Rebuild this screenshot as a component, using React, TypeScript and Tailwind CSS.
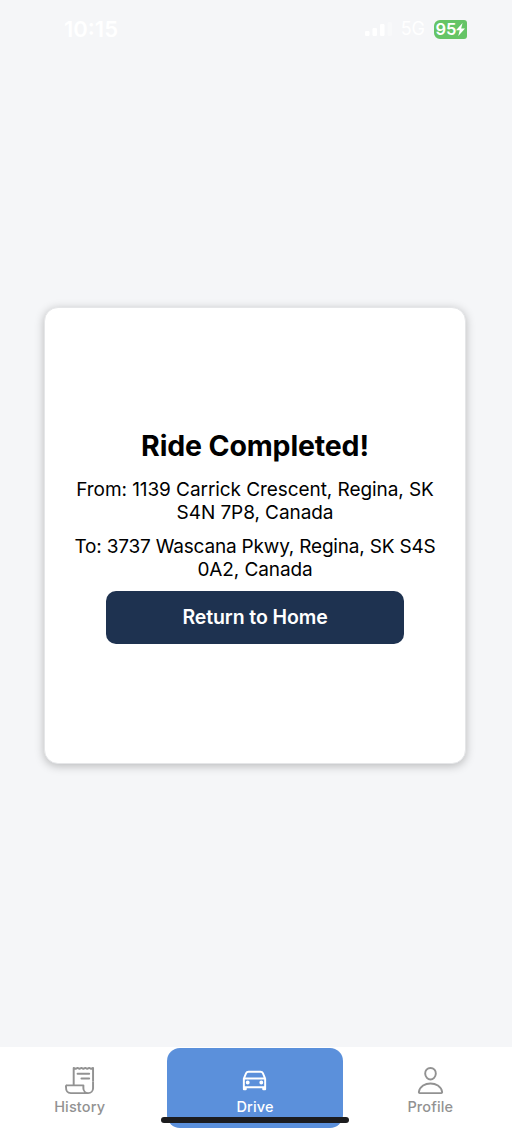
import type { ReactNode } from 'react';

function StatusBar() {
  return (
    <header className="flex h-[58px] shrink-0 items-center justify-between pl-16 pr-[45px] text-white">
      <time className="text-[22px] font-semibold leading-none">10:15</time>
      <div className="flex items-center">
        <svg className="h-[14px] w-[28px]" viewBox="0 0 28 14" fill="currentColor">
          <rect x="0" y="9" width="4.5" height="5" rx="1.2" />
          <rect x="7.5" y="6" width="4.5" height="8" rx="1.2" />
          <rect x="15" y="2" width="4.5" height="12" rx="1.2" />
          <rect x="22.5" y="0" width="4.5" height="14" rx="1.2" opacity="0.3" />
        </svg>
        <span className="ml-[8px] text-[18px] leading-none">5G</span>
        <div className="ml-[9px] flex h-[19px] w-[33px] items-center justify-center rounded-l-[6px] rounded-r-[3px] bg-[#65c466]">
          <span className="text-[16.5px] font-semibold leading-none">95</span>
          <svg className="h-[13px] w-[9px]" viewBox="0 0 8 13" preserveAspectRatio="none" fill="currentColor">
            <path d="M5.8 0 0 7.2h3.3L2 13l6-7.5H4.6z" />
          </svg>
        </div>
      </div>
    </header>
  );
}

function Icon({ children }: { children: ReactNode }) {
  return (
    <svg className="size-[31px]" viewBox="0 0 512 512" fill="none" stroke="currentColor" strokeWidth="32" strokeLinejoin="round">
      {children}
    </svg>
  );
}

function Tab({ label, active, children }: { label: string; active?: boolean; children: ReactNode }) {
  return (
    <button
      className={
        active
          ? 'flex flex-col items-center rounded-[13px] bg-[#5b90db] pt-[17.5px] text-white'
          : 'flex flex-col items-center pt-[17.5px] text-[#929292]'
      }
    >
      {children}
      <span className="mt-px text-[14.5px] font-medium leading-5 tracking-[0.15px]">{label}</span>
    </button>
  );
}

export default function App() {
  return (
    <div className="flex h-[1128px] w-[512px] flex-col overflow-hidden bg-[#f5f6f8] font-['Inter','Liberation_Sans',sans-serif]">
      <StatusBar />
      <main className="flex-1 pl-11 pt-[249px]">
        <section className="flex h-[457px] w-[422px] flex-col items-center rounded-[14px] border border-[#e5e6e8] bg-white pt-[120px] text-center text-black shadow-[0_2px_10px_rgba(0,0,0,0.25)]">
          <h1 className="text-[28.5px] font-bold leading-9 tracking-[-0.15px]">Ride Completed!</h1>
          <p className="mt-[14px] text-[19px] leading-[23px] tracking-[-0.07px]">
            From: 1139 Carrick Crescent, Regina, SK
            <br />
            S4N 7P8, Canada
          </p>
          <p className="mt-[11px] text-[19px] leading-[23px] tracking-[-0.19px]">
            To: 3737 Wascana Pkwy, Regina, SK S4S
            <br />
            <span className="tracking-[-0.1px]">0A2, Canada</span>
          </p>
          <button className="mt-[9.5px] h-[53px] w-[298px] shrink-0 rounded-[10px] bg-[#1e3250] pt-[2px] text-[19.5px] font-semibold tracking-[-0.1px] text-white">
            Return to Home
          </button>
        </section>
      </main>
      <nav className="relative h-[81px] shrink-0 bg-white">
        <div className="-ml-2 grid h-full w-[526px] grid-cols-3 pt-[0.5px]">
          <Tab label="History">
            <Icon>
              <path d="M160 336V48l32 16 32-16 31.94 16 32.37-16L320 64l31.79-16 31.93 16L416 48l32.01 16L480 48v224" />
              <path d="M480 272v112a80 80 0 0 1-80 80 80 80 0 0 1-80-80v-48H48a15.86 15.86 0 0 0-16 16c0 64 6.74 112 80 112h288" />
              <path strokeLinecap="round" d="M224 144h192M288 224h128" />
            </Icon>
          </Tab>
          <Tab label="Drive" active>
            <Icon>
              <path d="m80 224 37.78-88.15C123.93 121.5 139.6 112 157.11 112h197.78c17.51 0 33.18 9.5 39.33 23.85L432 224M80 224h352v144H80zM112 368v32H80v-32M432 368v32h-32v-32" />
              <circle cx="144" cy="288" r="16" />
              <circle cx="368" cy="288" r="16" />
            </Icon>
          </Tab>
          <Tab label="Profile">
            <Icon>
              <path d="M344 144c-3.92 52.87-44 96-88 96s-84.15-43.12-88-96c-4-55 35-96 88-96s92 42 88 96z" />
              <path d="M256 304c-87 0-175.3 48-191.64 138.6C62.39 453.52 68.57 464 80 464h352c11.44 0 17.62-10.48 15.65-21.4C431.3 352 343 304 256 304z" />
            </Icon>
          </Tab>
        </div>
        <div className="absolute left-[161px] top-[70px] h-[6px] w-[188px] rounded-full bg-[#1c1c1e]" />
      </nav>
    </div>
  );
}
